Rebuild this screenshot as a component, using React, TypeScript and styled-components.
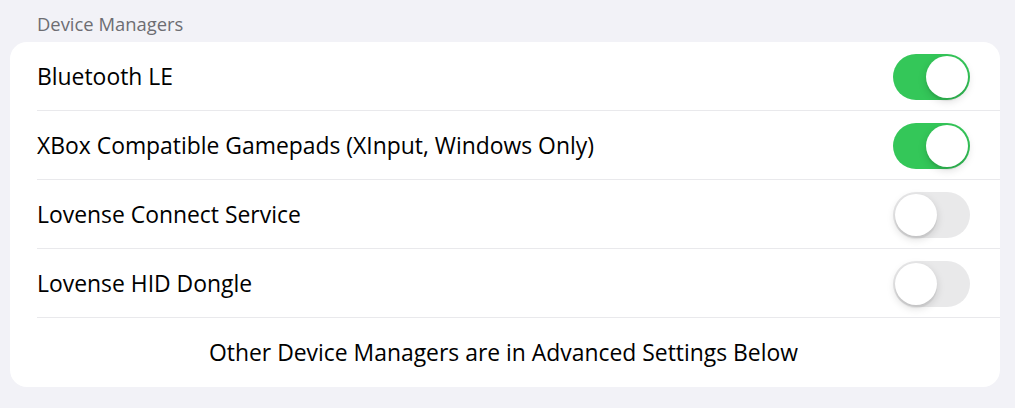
import React, { useState } from 'react';
import styled, { createGlobalStyle } from 'styled-components';

const GlobalStyle = createGlobalStyle`
  html, body {
    margin: 0;
    padding: 0;
    background: #f2f2f7;
  }
  body {
    font-family: 'Open Sans', 'Noto Sans', 'Liberation Sans', sans-serif;
    -webkit-font-smoothing: antialiased;
  }
`;

const Page = styled.div`
  width: 1015px;
  height: 408px;
  box-sizing: border-box;
  padding: 10px 15px 0 10px;
`;

const SectionHeader = styled.div`
  padding: 0 0 0 27px;
  height: 32px;
  font-size: 18.4px;
  line-height: 28px;
  color: #6d6d72;
`;

const Card = styled.div`
  background: #fff;
  border-radius: 17px;
  overflow: hidden;
`;

const Row = styled.div<{ $last?: boolean }>`
  position: relative;
  display: flex;
  align-items: center;
  justify-content: ${({ $last }) => ($last ? 'center' : 'space-between')};
  height: 69px;
  padding: 0 30px 0 27px;
  &::after {
    content: '';
    display: ${({ $last }) => ($last ? 'none' : 'block')};
    position: absolute;
    left: 27px;
    right: 0;
    bottom: 0;
    height: 1px;
    background: #e9e9ec;
  }
`;

const Label = styled.span`
  font-size: 22.9px;
  color: #000;
`;

const Track = styled.button<{ $on: boolean }>`
  position: relative;
  width: 77px;
  height: 46px;
  padding: 0;
  border: none;
  border-radius: 23px;
  background: ${({ $on }) => ($on ? '#34c759' : '#e9e9ea')};
  cursor: pointer;
  transition: background 0.2s;
`;

const Knob = styled.span<{ $on: boolean }>`
  position: absolute;
  top: 2px;
  left: ${({ $on }) => ($on ? '33px' : '2px')};
  width: 42px;
  height: 42px;
  border-radius: 50%;
  background: #fff;
  box-shadow: 0 3px 8px rgba(0, 0, 0, 0.15), 0 3px 1px rgba(0, 0, 0, 0.06);
  transition: left 0.2s;
`;

const Toggle = ({ initial }: { initial: boolean }) => {
  const [on, setOn] = useState(initial);
  return (
    <Track $on={on} onClick={() => setOn(!on)}>
      <Knob $on={on} />
    </Track>
  );
};

const managers = [
  { name: 'Bluetooth LE', on: true },
  { name: 'XBox Compatible Gamepads (XInput, Windows Only)', on: true },
  { name: 'Lovense Connect Service', on: false },
  { name: 'Lovense HID Dongle', on: false },
];

export default function App() {
  return (
    <Page>
      <GlobalStyle />
      <SectionHeader>Device Managers</SectionHeader>
      <Card>
        {managers.map((m) => (
          <Row key={m.name}>
            <Label>{m.name}</Label>
            <Toggle initial={m.on} />
          </Row>
        ))}
        <Row $last>
          <Label>Other Device Managers are in Advanced Settings Below</Label>
        </Row>
      </Card>
    </Page>
  );
}
